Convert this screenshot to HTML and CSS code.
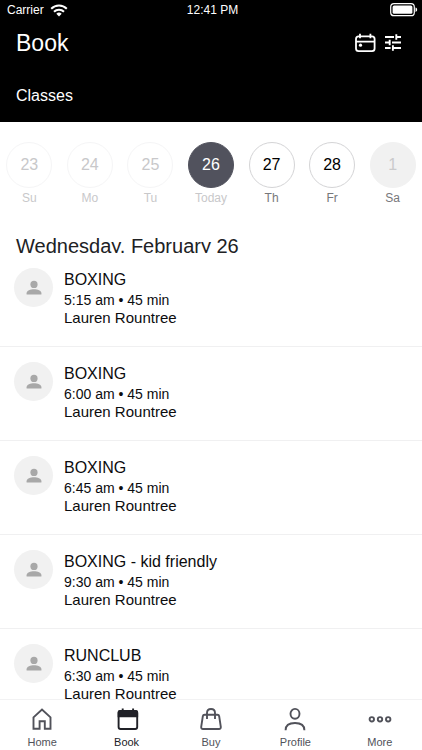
FILE: index.html
```html
<!DOCTYPE html>
<html lang="en">
<head>
<meta charset="utf-8">
<meta name="viewport" content="width=device-width, initial-scale=1">
<title>Book</title>
<link rel="stylesheet" href="styles.css">
</head>
<body>
<svg width="0" height="0" class="sprite" aria-hidden="true">
  <symbol id="person" viewBox="0 0 16 16"><circle cx="8" cy="4.400" r="3.600"/><path d="M.6 14.500v-1.300C.6 10.500 4.500 9.300 8 9.300s7.400 1.200 7.400 3.900v1.300z"/></symbol>
</svg>
<header class="top">
  <div class="status">
    <span class="carrier">Carrier
      <svg width="18" height="13" viewBox="0 0 18 13" aria-hidden="true"><g fill="none" stroke="#fff" stroke-width="2"><path d="M1.200 4.800a11 11 0 0 1 15.600 0"/><path d="M4 7.800a7 7 0 0 1 10 0"/></g><path fill="#fff" d="M9 12.500 6.300 9.800a3.800 3.800 0 0 1 5.400 0z"/></svg>
    </span>
    <span>12:41 PM</span>
    <span class="battery"><svg width="28" height="14" viewBox="0 0 28 14" aria-hidden="true"><rect x=".7" y=".7" width="23.600" height="12" rx="3.300" fill="none" stroke="#fff" stroke-width="1.200"/><rect x="2.600" y="2.600" width="19.800" height="8.200" rx="1.500" fill="#fff"/><path fill="#fff" d="M25.500 4.500c2.200.6 2.200 3.800 0 4.400z"/></svg></span>
  </div>
  <div class="title-row">
    <h1>Book</h1>
    <button aria-label="Choose date"><svg width="22" height="20" viewBox="0 0 22 20" fill="none" stroke="#fff" stroke-width="1.800" aria-hidden="true"><rect x="2" y="3.400" width="18.600" height="14.800" rx="2.600"/><path d="M2 8.600h18.600M6 .8v4.400M16.400.8v4.400"/><circle cx="6.500" cy="12.200" r="1.600" fill="#fff" stroke="none"/></svg></button>
    <button aria-label="Filter"><svg width="18" height="20" viewBox="0 0 18 20" fill="none" stroke="#fff" stroke-width="1.900" aria-hidden="true"><path d="M1 4h9M12.300 4H17M12.300 1.200v5.600M1 9.500h4.700M8 9.500h9M5.700 6.700v5.600M1 15h5.600M8.900 15H17M8.900 12.200v5.600"/></svg></button>
  </div>
  <h2>Classes</h2>
</header>
<nav class="days" aria-label="Days">
  <button class="day past"><span class="num">23</span>Su</button>
  <button class="day past"><span class="num">24</span>Mo</button>
  <button class="day past"><span class="num">25</span>Tu</button>
  <button class="day today"><span class="num">26</span>Today</button>
  <button class="day"><span class="num">27</span>Th</button>
  <button class="day"><span class="num">28</span>Fr</button>
  <button class="day closed"><span class="num">1</span>Sa</button>
</nav>
<main class="schedule">
  <h3>Wednesday, February 26</h3>
  <ul>
    <li><span class="avatar"><svg width="16" height="16" aria-hidden="true"><use href="#person"/></svg></span><div><h4>BOXING</h4><p class="time">5:15 am • 45 min</p><p class="coach">Lauren Rountree</p></div></li>
    <li><span class="avatar"><svg width="16" height="16" aria-hidden="true"><use href="#person"/></svg></span><div><h4>BOXING</h4><p class="time">6:00 am • 45 min</p><p class="coach">Lauren Rountree</p></div></li>
    <li><span class="avatar"><svg width="16" height="16" aria-hidden="true"><use href="#person"/></svg></span><div><h4>BOXING</h4><p class="time">6:45 am • 45 min</p><p class="coach">Lauren Rountree</p></div></li>
    <li><span class="avatar"><svg width="16" height="16" aria-hidden="true"><use href="#person"/></svg></span><div><h4>BOXING - kid friendly</h4><p class="time">9:30 am • 45 min</p><p class="coach">Lauren Rountree</p></div></li>
    <li><span class="avatar"><svg width="16" height="16" aria-hidden="true"><use href="#person"/></svg></span><div><h4>RUNCLUB</h4><p class="time">6:30 am • 45 min</p><p class="coach">Lauren Rountree</p></div></li>
  </ul>
</main>
<nav class="tabs" aria-label="Main">
  <a href="#home"><svg width="24" height="24" viewBox="0 0 24 24" aria-hidden="true"><path d="M3.500 21.800V10.400L12 2.600l8.500 7.800v11.400h-5.700v-7.600H9.600v7.600z"/></svg>Home</a>
  <a href="#book" class="current" aria-current="page"><svg width="24" height="24" viewBox="0 0 24 24" aria-hidden="true"><rect x="3.600" y="4" width="18.600" height="18" rx="2"/><path fill="currentColor" d="M3.600 9.400V5.500Q3.600 4 5.400 4h15q1.800 0 1.800 1.500v3.900zM7.700 1.600V4M18.100 1.600V4"/></svg>Book</a>
  <a href="#buy"><svg width="24" height="24" viewBox="0 0 24 24" aria-hidden="true"><path d="M5.600 7.800h12.800q1.500 0 1.800 1.500l1.600 10.500q.2 2.200-1.800 2.200H4q-2 0-1.800-2.200L3.800 9.300q.3-1.500 1.800-1.500zM8 12V6q0-4 4-4t4 4v6"/></svg>Buy</a>
  <a href="#profile"><svg width="24" height="24" viewBox="0 0 24 24" aria-hidden="true"><ellipse cx="12" cy="6.800" rx="4.500" ry="4.900"/><path d="M2.600 23.200c0-5 4-7.200 9.400-7.200s9.400 2.200 9.400 7.200"/></svg>Profile</a>
  <a href="#more"><svg width="24" height="24" viewBox="0 0 24 24" aria-hidden="true"><circle cx="3.800" cy="12.300" r="2.200"/><circle cx="12" cy="12.300" r="2.200"/><circle cx="20.200" cy="12.300" r="2.200"/></svg>More</a>
</nav>
</body>
</html>
```

FILE: styles.css
```css
* { box-sizing: border-box; margin: 0; padding: 0; }

body {
  display: flex;
  flex-direction: column;
  height: 100vh;
  overflow: hidden;
  background: #fff;
  color: #0c0c0e;
  font-family: "Liberation Sans", Arial, sans-serif;
}

button { border: 0; background: none; color: inherit; font: inherit; cursor: pointer; }
svg { display: block; }
h1, h2, h3, h4 { font-weight: 400; }
.sprite { position: absolute; }

.top { flex: none; background: #000; color: #fff; }

.status {
  display: grid;
  grid-template-columns: 1fr auto 1fr;
  align-items: center;
  height: 20px;
  padding: 0 4px 0 7px;
  font-size: 12px;
}
.carrier { display: flex; align-items: center; gap: 6px; }
.battery { justify-self: end; }

.title-row {
  display: flex;
  align-items: center;
  gap: 8px;
  height: 46px;
  padding: 0 20px 0 16px;
}
h1 { flex: 1; font-size: 23px; }
h2 { padding: 20px 16px 16px; font-size: 16px; line-height: 20px; }

.days {
  flex: none;
  display: grid;
  grid-template-columns: repeat(7, 1fr);
  margin: 0 -1px;
  padding: 20px 0 28px;
}
.day {
  display: flex;
  flex-direction: column;
  align-items: center;
  gap: 2px;
  color: #77777a;
  font-size: 12px;
  line-height: 16px;
}
.num {
  width: 46px;
  height: 46px;
  border: 1px solid #d4d4d6;
  border-radius: 50%;
  color: #000;
  font-size: 16px;
  line-height: 44px;
}
.past, .today { color: #c8c8ca; }
.past .num { border-color: #f5f5f6; color: #c8c8ca; }
.today .num { border-color: #51525d; background: #51525d; color: #fff; }
.closed .num { border-color: #f1f1f1; background: #f1f1f1; color: #cacacc; }

.schedule { flex: 1; min-height: 0; overflow: hidden; }
h3 {
  height: 19px;
  overflow: hidden;
  padding: 0 16px;
  color: #202124;
  font-size: 20px;
  line-height: 24px;
}
ul { list-style: none; }
li {
  display: flex;
  gap: 11px;
  height: 94px;
  padding: 15px 14px 0;
  border-bottom: 1px solid #f0f0f1;
}
.avatar {
  display: grid;
  place-items: center;
  width: 39px;
  height: 39px;
  border-radius: 50%;
  background: #f1f1f1;
  fill: #a8a8a8;
}
h4 { font-size: 16px; line-height: 24px; }
.time { font-size: 14px; line-height: 17px; }
.coach { font-size: 15px; line-height: 18px; }

.tabs {
  flex: none;
  display: grid;
  grid-template-columns: repeat(5, 1fr);
  height: 51px;
  padding-top: 7px;
  border-top: 1px solid #f2f2f3;
  background: #fff;
}
.tabs a {
  display: flex;
  flex-direction: column;
  align-items: center;
  gap: 4px;
  color: #51525a;
  font-size: 11px;
  line-height: 14px;
  text-decoration: none;
}
.tabs svg { fill: none; stroke: currentColor; stroke-width: 1.9px; }
.tabs .current { color: #202127; }
```
